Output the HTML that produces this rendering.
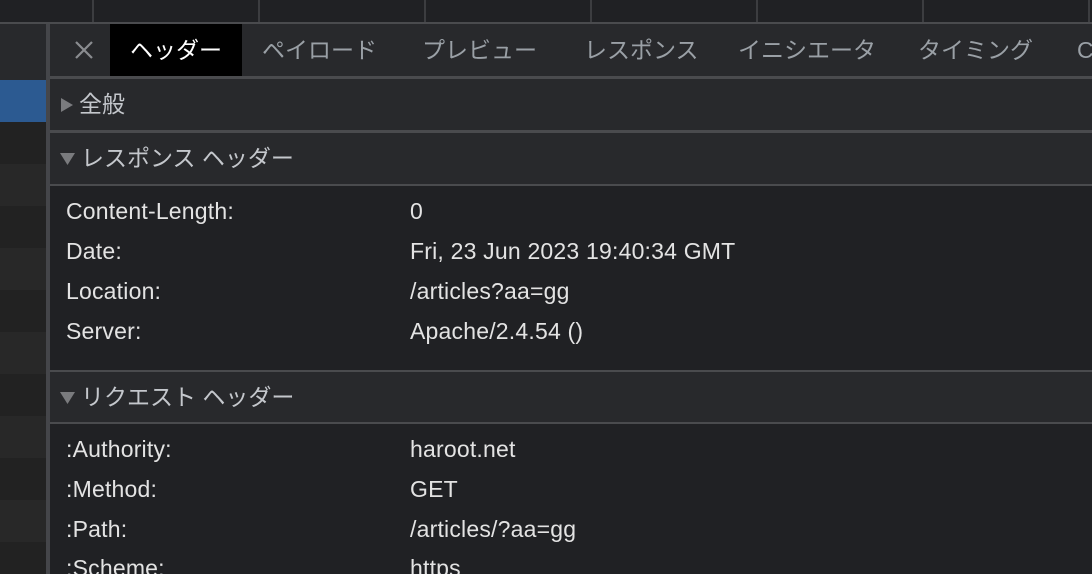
<!DOCTYPE html>
<html><head><meta charset="utf-8"><style>
*{margin:0;padding:0;box-sizing:border-box}
html,body{width:1092px;height:574px;overflow:hidden}
body{background:#202124;font-family:"Liberation Sans","Noto Sans CJK JP",sans-serif;position:relative}
.a{position:absolute}
.t{position:absolute;top:24px;height:52px;line-height:52px;font-size:23px;color:#9aa0a6;white-space:nowrap}
.sh{position:absolute;left:50px;right:0;background:#28292c;font-size:23px;color:#c4c7cc;white-space:nowrap}
.r{position:absolute;font-size:23px;letter-spacing:0.2px;color:#e3e3e3;white-space:nowrap}
</style></head><body>
<div class="a" style="left:0;top:22px;width:1092px;height:2px;background:#4a4b4e"></div>
<div class="a" style="left:92px;top:0;width:2px;height:22px;background:#3c3d40"></div>
<div class="a" style="left:258px;top:0;width:2px;height:22px;background:#3c3d40"></div>
<div class="a" style="left:424px;top:0;width:2px;height:22px;background:#3c3d40"></div>
<div class="a" style="left:590px;top:0;width:2px;height:22px;background:#3c3d40"></div>
<div class="a" style="left:756px;top:0;width:2px;height:22px;background:#3c3d40"></div>
<div class="a" style="left:922px;top:0;width:2px;height:22px;background:#3c3d40"></div>
<div class="a" style="left:1088px;top:0;width:2px;height:22px;background:#3c3d40"></div>
<div class="a" style="left:0;top:24px;width:46px;height:56px;background:#28292c"></div>
<div class="a" style="left:0;top:80px;width:46px;height:42px;background:#2c5a91"></div>
<div class="a" style="left:0;top:122px;width:46px;height:42px;background:#222"></div>
<div class="a" style="left:0;top:164px;width:46px;height:42px;background:#282828"></div>
<div class="a" style="left:0;top:206px;width:46px;height:42px;background:#222"></div>
<div class="a" style="left:0;top:248px;width:46px;height:42px;background:#282828"></div>
<div class="a" style="left:0;top:290px;width:46px;height:42px;background:#222"></div>
<div class="a" style="left:0;top:332px;width:46px;height:42px;background:#282828"></div>
<div class="a" style="left:0;top:374px;width:46px;height:42px;background:#222"></div>
<div class="a" style="left:0;top:416px;width:46px;height:42px;background:#282828"></div>
<div class="a" style="left:0;top:458px;width:46px;height:42px;background:#222"></div>
<div class="a" style="left:0;top:500px;width:46px;height:42px;background:#282828"></div>
<div class="a" style="left:0;top:542px;width:46px;height:42px;background:#222"></div>
<div class="a" style="left:46px;top:24px;width:4px;height:550px;background:#45464a"></div>
<div class="a" style="left:50px;top:24px;width:1042px;height:52px;background:#28292c"></div>
<svg class="a" style="left:74px;top:40px" width="20" height="20"><path d="M2 2L18 18M18 2L2 18" stroke="#8a8c90" stroke-width="2.2"/></svg>
<div class="a" style="left:110px;top:24px;width:132px;height:52px;background:#000"></div>
<div class="t" style="left:130px;color:#fff">ヘッダー</div>
<div class="t" style="left:262px">ペイロード</div>
<div class="t" style="left:422px">プレビュー</div>
<div class="t" style="left:584px">レスポンス</div>
<div class="t" style="left:738px">イニシエータ</div>
<div class="t" style="left:918px">タイミング</div>
<div class="t" style="left:1077px">C</div>
<div class="a" style="left:50px;top:76px;width:1042px;height:3px;background:#4a4b4e"></div>
<div class="sh" style="top:79px;height:51px;line-height:51px"><svg class="a" style="left:11px;top:19px" width="12" height="14"><path d="M0 0L12 7L0 14Z" fill="#7a7b7e"/></svg><span style="position:absolute;left:29px">全般</span></div>
<div class="a" style="left:50px;top:130px;width:1042px;height:3px;background:#4a4b4e"></div>
<div class="sh" style="top:133px;height:51px;line-height:51px"><svg class="a" style="left:10px;top:20px" width="15" height="12"><path d="M0 0L15 0L7.5 12Z" fill="#7a7b7e"/></svg><span style="position:absolute;left:31px">レスポンス ヘッダー</span></div>
<div class="a" style="left:50px;top:184px;width:1042px;height:2px;background:#4a4b4e"></div>
<div class="r" style="left:66px;top:198px">Content-Length:</div><div class="r" style="left:410px;top:198px">0</div>
<div class="r" style="left:66px;top:238px">Date:</div><div class="r" style="left:410px;top:238px">Fri, 23 Jun 2023 19:40:34 GMT</div>
<div class="r" style="left:66px;top:278px">Location:</div><div class="r" style="left:410px;top:278px">/articles?aa=gg</div>
<div class="r" style="left:66px;top:318px">Server:</div><div class="r" style="left:410px;top:318px">Apache/2.4.54 ()</div>
<div class="a" style="left:50px;top:370px;width:1042px;height:2px;background:#4a4b4e"></div>
<div class="sh" style="top:372px;height:50px;line-height:50px"><svg class="a" style="left:10px;top:20px" width="15" height="12"><path d="M0 0L15 0L7.5 12Z" fill="#7a7b7e"/></svg><span style="position:absolute;left:31px">リクエスト ヘッダー</span></div>
<div class="a" style="left:50px;top:422px;width:1042px;height:2px;background:#4a4b4e"></div>
<div class="r" style="left:66px;top:436px">:Authority:</div><div class="r" style="left:410px;top:436px">haroot.net</div>
<div class="r" style="left:66px;top:476px">:Method:</div><div class="r" style="left:410px;top:476px">GET</div>
<div class="r" style="left:66px;top:516px">:Path:</div><div class="r" style="left:410px;top:516px">/articles/?aa=gg</div>
<div class="r" style="left:66px;top:555px">:Scheme:</div><div class="r" style="left:410px;top:555px">https</div>
</body></html>
